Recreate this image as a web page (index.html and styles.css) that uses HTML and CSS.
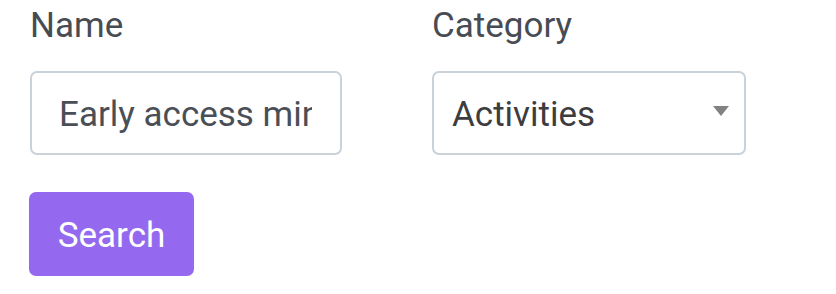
FILE: index.html
```html
<!DOCTYPE html>
<html>
<head>
<meta charset="utf-8">
<link rel="stylesheet" href="styles.css">
</head>
<body>
<form class="search-form">
  <div class="fields">
    <div class="field field-name">
      <label class="label" for="name">Name</label>
      <input class="text-input" id="name" type="text" value="Early access mini golf">
    </div>
    <div class="field field-category">
      <label class="label" for="category">Category</label>
      <div class="select">
        <span class="select-value">Activities</span>
        <svg class="select-arrow" width="16" height="10" viewBox="0 0 16 10"><path d="M0 0 H16 L8 10 Z" fill="#828282"/></svg>
      </div>
    </div>
  </div>
  <button class="btn" type="button">Search</button>
</form>
</body>
</html>
```

FILE: styles.css
```css
html, body {
  margin: 0;
  padding: 0;
  background: #ffffff;
}
body {
  font-family: Roboto, "Liberation Sans", sans-serif;
}
.search-form {
  padding: 5px 0 0 30px;
  display: flex;
  flex-direction: column;
  align-items: flex-start;
}
.fields {
  display: flex;
  gap: 89px;
}
.field {
  display: flex;
  flex-direction: column;
  width: 313px;
}
.label {
  font-size: 35px;
  line-height: 41px;
  color: #474c54;
  margin-bottom: 25px;
}
.text-input {
  box-sizing: border-box;
  width: 312px;
  height: 84px;
  border: 2px solid #c9d1d9;
  border-radius: 7px;
  padding: 3px 28px 0 27px;
  font-family: Roboto, "Liberation Sans", sans-serif;
  font-size: 35px;
  color: #4a4f57;
  background: #fff;
  outline: none;
  margin: 0;
}
.select {
  box-sizing: border-box;
  width: 314px;
  height: 84px;
  border: 2px solid #c9d1d9;
  border-radius: 7px;
  padding: 3px 15px 0 18px;
  display: flex;
  align-items: center;
  justify-content: space-between;
  background: #fff;
}
.select-value {
  font-size: 35px;
  color: #3d3d3f;
}
.select-arrow {
  display: block;
  margin-top: -7px;
}
.btn {
  margin-top: 37px;
  margin-left: -1px;
  box-sizing: border-box;
  width: 165px;
  height: 84px;
  border: none;
  border-radius: 7px;
  background: #9469ef;
  color: #ffffff;
  font-family: Roboto, "Liberation Sans", sans-serif;
  font-size: 35px;
  padding: 2px 0 0;
  cursor: pointer;
}
```
